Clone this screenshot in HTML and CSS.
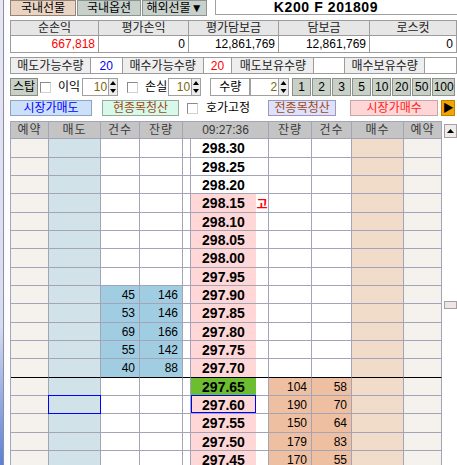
FILE: index.html
```html
<!DOCTYPE html>
<html lang="ko">
<head>
<meta charset="utf-8">
<title>K200 F 201809</title>
<link rel="stylesheet" href="styles.css">
</head>
<body>
<div class="page">
  <div class="edge"></div>
  <div class="main">
    <div class="tabs">
      <div class="tab tab-a">국내선물</div>
      <div class="tab tab-b">국내옵션</div>
      <div class="tab tab-c">해외선물▼</div>
      <div class="title">K200 F 201809</div>
    </div>

    <div class="summary">
      <div class="sh">순손익</div>
      <div class="sh">평가손익</div>
      <div class="sh">평가담보금</div>
      <div class="sh">담보금</div>
      <div class="sh">로스컷</div>
      <div class="sv red">667,818</div>
      <div class="sv">0</div>
      <div class="sv">12,861,769</div>
      <div class="sv">12,861,769</div>
      <div class="sv">0</div>
    </div>

    <div class="qty">
      <div class="lab q-l1">매도가능수량</div>
      <div class="val q-v1 blue">20</div>
      <div class="lab q-l2">매수가능수량</div>
      <div class="val q-v2 red">20</div>
      <div class="lab q-l3">매도보유수량</div>
      <div class="val q-v3"></div>
      <div class="lab q-l4">매수보유수량</div>
      <div class="val q-v4"></div>
    </div>

    <div class="stop">
      <div class="sbtn">스탑</div>
      <span class="chk c1"></span>
      <span class="lbl l1">이익</span>
      <div class="spin s1"><span class="spv">10</span><span class="arr"><svg width="8" height="16" viewBox="0 0 8 16"><polygon points="4,2 1,6 7,6" fill="#000"/><polygon points="1,10 7,10 4,14" fill="#000"/></svg></span></div>
      <span class="chk c2"></span>
      <span class="lbl l2">손실</span>
      <div class="spin s2"><span class="spv">10</span><span class="arr"><svg width="8" height="16" viewBox="0 0 8 16"><polygon points="4,2 1,6 7,6" fill="#000"/><polygon points="1,10 7,10 4,14" fill="#000"/></svg></span></div>
      <div class="qlab">수량</div>
      <div class="spin s3"><span class="spv">2</span><span class="arr"><svg width="9" height="16" viewBox="0 0 9 16"><polygon points="4.5,2 1.5,6 7.5,6" fill="#000"/><polygon points="1.5,10 7.5,10 4.5,14" fill="#000"/></svg></span></div>
      <div class="nums">
        <span>1</span><span>2</span><span>3</span><span>5</span><span>10</span><span>20</span><span>50</span><span class="last">100</span>
      </div>
    </div>

    <div class="acts">
      <div class="ab sell">시장가매도</div>
      <div class="ab clr1">현종목청산</div>
      <span class="chk c3"></span>
      <span class="lbl l3">호가고정</span>
      <div class="ab clr2">전종목청산</div>
      <div class="ab buy">시장가매수</div>
      <div class="ab go">▶</div>
    </div>

    <div class="bookwrap">
      <div class="book">
        <div class="row head">
          <div>예약</div><div>매도</div><div>건수</div><div>잔량</div><div class="time">09:27:36</div><div>잔량</div><div>건수</div><div>매수</div><div>예약</div>
        </div>

        <div class="row"><div class="res"></div><div class="ask"></div><div class="n"></div><div class="n"></div><div class="gp"></div><div class="pc"><span class="px">298.30</span><span class="mk"></span></div><div class="n"></div><div class="n"></div><div class="bid"></div><div class="res"></div></div>
        <div class="row"><div class="res"></div><div class="ask"></div><div class="n"></div><div class="n"></div><div class="gp"></div><div class="pc"><span class="px">298.25</span><span class="mk"></span></div><div class="n"></div><div class="n"></div><div class="bid"></div><div class="res"></div></div>
        <div class="row"><div class="res"></div><div class="ask"></div><div class="n"></div><div class="n"></div><div class="gp"></div><div class="pc"><span class="px">298.20</span><span class="mk"></span></div><div class="n"></div><div class="n"></div><div class="bid"></div><div class="res"></div></div>
        <div class="row"><div class="res"></div><div class="ask"></div><div class="n"></div><div class="n"></div><div class="gp"></div><div class="pc"><span class="px pk">298.15</span><span class="mk hi">고</span></div><div class="n"></div><div class="n"></div><div class="bid"></div><div class="res"></div></div>
        <div class="row"><div class="res"></div><div class="ask"></div><div class="n"></div><div class="n"></div><div class="gp"></div><div class="pc"><span class="px pk">298.10</span><span class="mk"></span></div><div class="n"></div><div class="n"></div><div class="bid"></div><div class="res"></div></div>
        <div class="row"><div class="res"></div><div class="ask"></div><div class="n"></div><div class="n"></div><div class="gp"></div><div class="pc"><span class="px pk">298.05</span><span class="mk"></span></div><div class="n"></div><div class="n"></div><div class="bid"></div><div class="res"></div></div>
        <div class="row"><div class="res"></div><div class="ask"></div><div class="n"></div><div class="n"></div><div class="gp"></div><div class="pc"><span class="px pk">298.00</span><span class="mk"></span></div><div class="n"></div><div class="n"></div><div class="bid"></div><div class="res"></div></div>
        <div class="row"><div class="res"></div><div class="ask"></div><div class="n"></div><div class="n"></div><div class="gp"></div><div class="pc"><span class="px pk">297.95</span><span class="mk"></span></div><div class="n"></div><div class="n"></div><div class="bid"></div><div class="res"></div></div>
        <div class="row"><div class="res"></div><div class="ask"></div><div class="n sb">45</div><div class="n sb">146</div><div class="gp"></div><div class="pc"><span class="px pk">297.90</span><span class="mk"></span></div><div class="n"></div><div class="n"></div><div class="bid"></div><div class="res"></div></div>
        <div class="row"><div class="res"></div><div class="ask"></div><div class="n sb">53</div><div class="n sb">146</div><div class="gp"></div><div class="pc"><span class="px pk">297.85</span><span class="mk"></span></div><div class="n"></div><div class="n"></div><div class="bid"></div><div class="res"></div></div>
        <div class="row"><div class="res"></div><div class="ask"></div><div class="n sb">69</div><div class="n sb">166</div><div class="gp"></div><div class="pc"><span class="px pk">297.80</span><span class="mk"></span></div><div class="n"></div><div class="n"></div><div class="bid"></div><div class="res"></div></div>
        <div class="row"><div class="res"></div><div class="ask"></div><div class="n sb">55</div><div class="n sb">142</div><div class="gp"></div><div class="pc"><span class="px pk">297.75</span><span class="mk"></span></div><div class="n"></div><div class="n"></div><div class="bid"></div><div class="res"></div></div>
        <div class="row mid"><div class="res"></div><div class="ask"></div><div class="n sb">40</div><div class="n sb">88</div><div class="gp"></div><div class="pc"><span class="px pk">297.70</span><span class="mk"></span></div><div class="n"></div><div class="n"></div><div class="bid"></div><div class="res"></div></div>
        <div class="row"><div class="res"></div><div class="ask"></div><div class="n"></div><div class="n"></div><div class="gp"></div><div class="pc"><span class="px gr">297.65</span><span class="mk"></span></div><div class="n pe">104</div><div class="n pe">58</div><div class="bid"></div><div class="res"></div></div>
        <div class="row"><div class="res"></div><div class="ask sel"></div><div class="n"></div><div class="n"></div><div class="gp"></div><div class="pc"><span class="px pk sel">297.60</span><span class="mk"></span></div><div class="n pe">190</div><div class="n pe">70</div><div class="bid"></div><div class="res"></div></div>
        <div class="row"><div class="res"></div><div class="ask"></div><div class="n"></div><div class="n"></div><div class="gp"></div><div class="pc"><span class="px pk">297.55</span><span class="mk"></span></div><div class="n pe">150</div><div class="n pe">64</div><div class="bid"></div><div class="res"></div></div>
        <div class="row"><div class="res"></div><div class="ask"></div><div class="n"></div><div class="n"></div><div class="gp"></div><div class="pc"><span class="px pk">297.50</span><span class="mk"></span></div><div class="n pe">179</div><div class="n pe">83</div><div class="bid"></div><div class="res"></div></div>
        <div class="row"><div class="res"></div><div class="ask"></div><div class="n"></div><div class="n"></div><div class="gp"></div><div class="pc"><span class="px pk">297.45</span><span class="mk"></span></div><div class="n pe">170</div><div class="n pe">55</div><div class="bid"></div><div class="res"></div></div>
      </div>
      <div class="scroll">
        <div class="sup"><svg width="7" height="4" viewBox="0 0 7 4"><polygon points="3.5,0 0,4 7,4" fill="#000"/></svg></div>
        <div class="thumb"></div>
      </div>
    </div>
  </div>
</div>
</body>
</html>
```

FILE: styles.css
```css
* { box-sizing: border-box; }
html, body { margin: 0; padding: 0; }
body {
  width: 457px;
  height: 465px;
  overflow: hidden;
  background: #fff;
  font-family: "Liberation Sans", "Noto Sans CJK KR", sans-serif;
  font-size: 12px;
  color: #000;
}
.page { display: flex; height: 465px; }
.edge {
  width: 10px;
  flex: none;
  background:
    linear-gradient(to right, transparent 3px, #8e8e9c 3px, #8e8e9c 4px, #fbfbfe 4px, #ffffff 10px),
    linear-gradient(to bottom, #e6e6f4 0%, #d6dcf2 70%, #5a80d8 100%);
}
.main { width: 447px; flex: none; display: flex; flex-direction: column; }

/* tabs */
.tabs { display: flex; height: 16px; }
.tab {
  height: 16px;
  border: 1px solid #8a8a8a;
  display: flex;
  align-items: center;
  justify-content: center;
  line-height: 14px;
}
.tab-a { width: 66px; background: #e9d4c4; border-color: #9a8274; }
.tab-b { width: 64px; margin-left: 1px; background: #c8d0cc; border-color: #8c948f; }
.tab-c { width: 65px; margin-left: 1px; background: #c8d0cc; border-color: #8c948f; }
.title {
  margin-left: 8px;
  flex: 1;
  height: 15px;
  border-left: 1px solid #a0a0a0;
  border-bottom: 1px solid #a0a0a0;
  display: flex;
  align-items: center;
  justify-content: center;
  padding-right: 21px;
  font-weight: bold;
  font-size: 14px;
  letter-spacing: 0.6px;
}

/* summary */
.summary {
  margin-top: 4px;
  display: grid;
  grid-template-columns: 88px 90px 90px 91px 87px;
  border-left: 1px solid #9c9c9c;
  border-top: 1px solid #9c9c9c;
}
.summary > div { border-right: 1px solid #9c9c9c; border-bottom: 1px solid #9c9c9c; }
.sh {
  height: 15px;
  background: #e6e6e6;
  display: flex;
  align-items: center;
  justify-content: center;
  line-height: 14px;
  color: #222;
}
.sv {
  height: 17px;
  display: flex;
  align-items: center;
  justify-content: flex-end;
  padding-right: 3px;
}
.red { color: #ff0000; }
.blue { color: #0000ff; }

/* quantity row */
.qty { margin-top: 4px; display: flex; height: 17px; }
.qty > div {
  height: 17px;
  border: 1px solid #9c9c9c;
  display: flex;
  align-items: center;
  justify-content: center;
  line-height: 14px;
}
.qty > div + div { margin-left: -1px; }
.lab { background: #eeeeee; color: #222; }
.val { background: #fff; }
.q-l1 { width: 81px; }
.q-v1 { width: 33px; }
.q-l2 { width: 82px; }
.q-v2 { width: 30px; }
.q-l3 { width: 83px; }
.q-v3 { width: 32px; }
.q-l4 { width: 81px; }
.q-v4 { width: 33px; }

/* stop row */
.stop { margin-top: 4px; display: flex; align-items: center; height: 18px; }
.sbtn {
  width: 28px;
  height: 18px;
  background: #c8d0c8;
  border: 1px solid #858d85;
  display: flex;
  align-items: center;
  justify-content: center;
  line-height: 14px;
}
.chk {
  width: 11px;
  height: 11px;
  flex: none;
  background: #fff;
  border: 1px solid #8a8a8a;
  border-right-color: #d0d0d0;
  border-bottom-color: #d0d0d0;
}
.lbl { line-height: 14px; flex: none; }
.c1 { margin-left: 2px; }
.l1 { margin-left: 7px; }
.s1 { margin-left: 2px; }
.c2 { margin-left: 9px; }
.l2 { margin-left: 7px; }
.s2 { margin-left: 1px; }
.spin { display: flex; height: 18px; }
.spv {
  height: 18px;
  border: 1px solid #a0a0a0;
  background: #fff;
  color: #7d6608;
  display: flex;
  align-items: center;
  justify-content: flex-end;
  padding-right: 1px;
}
.arr {
  width: 10px;
  height: 18px;
  margin-left: -1px;
  border: 1px solid #a0a0a0;
  background: #ececec;
  display: flex;
  align-items: center;
  justify-content: center;
}
.s1 .spv { width: 27px; }
.s2 .spv { width: 24px; }
.s3 .spv { width: 29px; }
.s3 .arr { width: 11px; }
.qlab {
  margin-left: 9px;
  width: 40px;
  height: 18px;
  border: 1px solid #a0a0a0;
  background: #fff;
  display: flex;
  align-items: center;
  justify-content: center;
  line-height: 14px;
}
.s3 { margin-left: 0; }
.nums { margin-left: 3px; display: flex; gap: 1px; }
.nums span {
  width: 19px;
  height: 18px;
  background: #c8d0c8;
  border: 1px solid #8a928a;
  display: flex;
  align-items: center;
  justify-content: center;
}
.nums span.last { width: 23px; }

/* action row */
.acts { margin-top: 4px; display: flex; align-items: center; height: 16px; }
.ab {
  height: 16px;
  display: flex;
  align-items: center;
  justify-content: center;
  line-height: 14px;
  border: 1px solid #9a9a9a;
  flex: none;
}
.sell { width: 82px; background: #cde0fa; border-color: #8ea4c4; color: #0000ff; }
.clr1 { width: 77px; margin-left: 10px; background: #d8f8ea; border-color: #93ab9c; color: #a04a14; }
.c3 { margin-left: 8px; }
.l3 { margin-left: 8px; }
.clr2 { width: 68px; margin-left: 18px; background: #dfe0fb; border-color: #9a9abc; color: #a04a14; }
.buy { width: 88px; margin-left: 14px; background: #ffd6d6; border-color: #c8a4a4; color: #ff2020; }
.go { width: 14px; margin-left: 3px; background: #f5a300; border-color: #c08000; font-size: 11px; color: #000; }

/* order book */
.bookwrap { margin-top: 5px; display: flex; }
.book {
  width: 432px;
  flex: none;
  border-left: 1px solid #a4a4b8;
  border-top: 1px solid #a4a4b8;
}
.row {
  display: grid;
  grid-template-columns: 38px 52px 39px 43px 8px 78px 43px 40px 52px 38px;
  height: 18px;
}
.book > .row:nth-child(3n+2) { height: 19px; }
.row > div {
  border-right: 1px solid #a4a4b8;
  border-bottom: 1px solid #a4a4b8;
  display: flex;
  align-items: center;
}
.row.head { height: 17px; }
.row.head > div {
  background: #c4c4c4;
  color: #3a3a3a;
  justify-content: center;
  letter-spacing: 1px;
  line-height: 14px;
}
.row.head > .time { grid-column: span 2; letter-spacing: 0; }
.row.mid > div { border-bottom-color: #000; }

.res { background: #f5f2ee; }
.ask { background: #d1e2e9; }
.bid { background: #f0dcc9; }
.gp { background: #fff; }
.n { justify-content: flex-end; padding-right: 4px; background: #fff; }
.n.sb { background: #a1cde2; }
.n.pe { background: #efbfa1; }
.pc { background: #fff; align-items: stretch !important; }
.px {
  width: 65px;
  display: flex;
  align-items: center;
  justify-content: center;
  font-weight: bold;
  font-size: 14px;
  background: #fff;
}
.px.pk { background: #ffd7d7; }
.px.gr { background: #6cbe30; }
.mk {
  flex: 1;
  display: flex;
  align-items: center;
  justify-content: center;
}
.mk.hi { color: #ff0000; font-weight: bold; font-family: "Noto Sans CJK KR", sans-serif; }
.sel { position: relative; }
.ask.sel::after {
  content: "";
  position: absolute;
  left: -1px;
  top: -1px;
  right: -1px;
  bottom: -1px;
  border: 1px solid #0000ff;
}
.px.sel::after {
  content: "";
  position: absolute;
  left: 0;
  top: -1px;
  right: 0;
  bottom: 0;
  border: 1px solid #0000ff;
}

.scroll { width: 15px; flex: none; display: flex; flex-direction: column; align-items: flex-end; }
.sup {
  margin-top: 3px;
  width: 13px;
  height: 14px;
  background: #f0ebeb;
  border: 1px solid #a8a0a0;
  display: flex;
  align-items: center;
  justify-content: center;
}
.thumb {
  margin-top: 163px;
  width: 13px;
  height: 8px;
  background: #ece6e6;
  border: 1px solid #a8a0a0;
}
```
